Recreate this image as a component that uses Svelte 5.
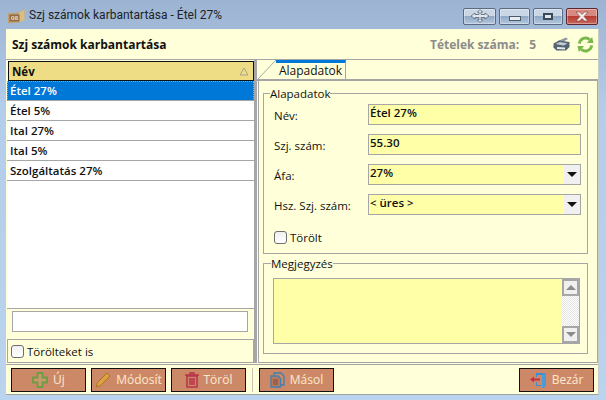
<script>
  const rows = ['Étel 27%', 'Étel 5%', 'Ital 27%', 'Ital 5%', 'Szolgáltatás 27%'];
  const fields = [
    { label: 'Név:', value: 'Étel 27%' },
    { label: 'Szj. szám:', value: '55.30' },
    { label: 'Áfa:', value: '27%', select: true },
    { label: 'Hsz. Szj. szám:', value: '< üres >', select: true }
  ];
</script>

<div class="window">
  <div class="titlebar">
    <svg class="app-icon" width="17" height="15" viewBox="0 0 17 15">
      <path d="M0 4.500 L10 3.500 L16.500 .5 L16.500 11 L11 13.500 L0 14 Z" fill="#c4a066" />
      <path d="M11 3.500 L16.500 .5 L16.500 11 L11 13.500 Z" fill="#d8bd88" />
      <rect x="1.500" y="5.500" width="10" height="7" fill="#8a6f48" />
      <text x="6.500" y="11" text-anchor="middle" font-size="5.500" font-family="'DejaVu Sans', sans-serif" font-weight="700" fill="#e6d6b4">08</text>
    </svg>
    <span class="title">Szj számok karbantartása - Étel 27%</span>
    <div class="caption">
      <div class="cap move">
        <svg width="20" height="14" viewBox="0 0 20 14">
          <path d="M10 .5 L12.500 3 H11 V5.500 H15 V4 L19 7 L15 10 V8.500 H11 V11 H12.500 L10 13.500 L7.500 11 H9 V8.500 H5 V10 L1 7 L5 4 V5.500 H9 V3 H7.500 Z" fill="#dfe6ee" stroke="#5c6470" stroke-width=".8" />
        </svg>
      </div>
      <div class="cap min"><span class="min-bar"></span></div>
      <div class="cap max"><span class="max-box"></span></div>
      <div class="cap close">
        <svg width="14" height="11" viewBox="0 0 14 11">
          <path d="M1 1 H4.500 L7 3.500 L9.500 1 H13 L9 5.500 L13 10 H9.500 L7 7.500 L4.500 10 H1 L5 5.500 Z" fill="#f3f0f0" stroke="#7c3a3a" stroke-width=".6" />
        </svg>
      </div>
    </div>
  </div>

  <div class="client">
    <header>
      <h1>Szj számok karbantartása</h1>
      <span class="count-label">Tételek száma:</span>
      <span class="count">5</span>
      <svg class="printer" width="17" height="14" viewBox="0 0 17 14">
        <path d="M5 4 L13 .5 L15 2 L8 6 Z" fill="#8f98a2" />
        <path d="M.5 6.500 L6 3.500 L16.500 5 L16.500 10 L13 13.500 L3.500 13.500 L.5 10.500 Z" fill="#566470" />
        <path d="M2.500 7 L7 5 L14.500 6.500 L10.500 8.500 Z" fill="#c4ced6" />
        <path d="M4 10 L12 10.500 L12 12.500 L4 12 Z" fill="#e4eaee" />
      </svg>
      <svg class="refresh" width="17" height="17" viewBox="0 0 18 18" fill="none">
        <path d="M2.500 8 A6.500 6.500 0 0 1 13.500 4" stroke="#7ab84e" stroke-width="3" />
        <path d="M10.500 7.500 L17.500 7.500 L16 1 Z" fill="#7ab84e" />
        <path d="M15.500 10 A6.500 6.500 0 0 1 4.500 14" stroke="#7ab84e" stroke-width="3" />
        <path d="M7.500 10.500 L.5 10.500 L2 17 Z" fill="#7ab84e" />
      </svg>
    </header>

    <div class="main">
      <div class="left">
        <div class="list">
          <div class="list-head">
            <span>Név</span>
            <svg width="10" height="9" viewBox="0 0 10 9"><path d="M5 1 L9 8 H1 Z" fill="none" stroke="#a8a48a" /></svg>
          </div>
          {#each rows as row, i}
            <div class="row" class:selected={i === 0}>{row}</div>
          {/each}
        </div>
        <div class="search"><div class="search-box"></div></div>
        <div class="deleted">
          <span class="check"></span>
          <span>Törölteket is</span>
        </div>
      </div>

      <div class="splitter"></div>

      <div class="right">
        <div class="tabs">
          <svg class="slant" width="18" height="19" viewBox="0 0 18 19"><path d="M0 19 L18 0" stroke="#a6a6a6" fill="none" /></svg>
          <div class="tab">Alapadatok</div>
        </div>
        <div class="panel">
          <fieldset class="basic">
            <legend>Alapadatok</legend>
            {#each fields as f}
              <div class="field">
                <span class="label">{f.label}</span>
                <div class="input">
                  <span>{f.value}</span>
                  {#if f.select}<span class="drop"><i></i></span>{/if}
                </div>
              </div>
            {/each}
            <div class="deleted-flag">
              <span class="check"></span>
              <span>Törölt</span>
            </div>
          </fieldset>
          <fieldset class="note">
            <legend>Megjegyzés</legend>
            <div class="memo">
              <div class="scroll">
                <div class="sbtn"><i class="up"></i></div>
                <div class="strack"></div>
                <div class="sbtn"><i class="down"></i></div>
              </div>
            </div>
          </fieldset>
        </div>
      </div>
    </div>

    <footer>
      <div class="btn">
        <svg width="16" height="16" viewBox="0 0 16 16"><path d="M5.500 1 H10.500 V5.500 H15 V10.500 H10.500 V15 H5.500 V10.500 H1 V5.500 H5.500 Z" fill="#c79a6c" stroke="#6f9a45" stroke-width="1.800" /></svg>
        <span>Új</span>
      </div>
      <div class="btn">
        <svg width="16" height="16" viewBox="0 0 16 16"><path d="M1 15 L2.500 10.500 L12 1 L15 4 L5.500 13.500 Z" fill="#e0a040" stroke="#a87420" /></svg>
        <span>Módosít</span>
      </div>
      <div class="btn">
        <svg width="14" height="16" viewBox="0 0 14 16" fill="none" stroke="#b8324a" stroke-width="1.500"><path d="M0 3 H14" /><path d="M5 2.500 V1 H9 V2.500" /><path d="M2 4 H12 V15 H2 Z" /><path d="M5 6 V13 M7 6 V13 M9 6 V13" /></svg>
        <span>Töröl</span>
      </div>
      <div class="sep"></div>
      <div class="btn">
        <svg width="15" height="16" viewBox="0 0 15 16" fill="none"><path d="M4 3 V1 H11 L14 4 V13 H11" stroke="#3f7fb0" stroke-width="1.300" /><path d="M1 4 H8 L10.500 6.500 V15 H1 Z" fill="#b97a5c" stroke="#3f7fb0" stroke-width="1.300" /><path d="M3 8 H8 M3 10 H8 M3 12 H8" stroke="#7a4a38" /></svg>
        <span>Másol</span>
      </div>
      <div class="spacer"></div>
      <div class="btn">
        <svg width="17" height="16" viewBox="0 0 17 16"><path d="M6 1 H16 V14 L12 16 V3 H7 V5 H6 Z M6 10 H7 V13 H11 V14 H6 Z" fill="#3e8ccc" /><path d="M12 3 L16 1 V14 L12 16 Z" fill="#4b9bd8" /><path d="M0 7.500 L4 4.500 V6.500 H10 V8.500 H4 V10.500 Z" fill="#c8304a" /></svg>
        <span>Bezár</span>
      </div>
    </footer>
  </div>
</div>

<style>
  :global(body) {
    margin: 0;
    background: #b9d1ec;
  }
  .window {
    width: 606px;
    height: 400px;
    box-sizing: border-box;
    padding: 0 7px 5px 6px;
    display: flex;
    flex-direction: column;
    background: linear-gradient(#9cb4d2, #b4cdea 110px, #bad3ee);
    font-family: "Open Sans", "Noto Sans", sans-serif;
    font-size: 11.500px;
    color: #111;
  }
  .titlebar {
    height: 29px;
    flex: none;
    display: flex;
    align-items: center;
    padding-top: 1px;
    box-sizing: border-box;
  }
  .app-icon {
    margin: 2px 4px 0 2px;
  }
  .title {
    font-family: Roboto, sans-serif;
    font-size: 12px;
    color: #1c2228;
  }
  .caption {
    margin-left: auto;
    display: flex;
    gap: 3px;
    margin-right: 1px;
    margin-top: 2px;
  }
  .cap {
    height: 17px;
    box-sizing: border-box;
    width: 32px;
    border: 1px solid #5a6a80;
    border-radius: 2px;
    display: flex;
    align-items: center;
    justify-content: center;
    background: linear-gradient(#c8d6e6 45%, #8fa9c7 50%, #b4c8de);
    box-shadow: inset 0 0 0 1px rgba(255, 255, 255, 0.35);
  }
  .move {
    width: 33px;
  }
  .min {
    width: 31px;
  }
  .max {
    width: 30px;
  }
  .min-bar {
    width: 10px;
    height: 3px;
    margin-top: 5px;
    background: #e8edf3;
    border: 1px solid #4c5a6c;
  }
  .max-box {
    width: 6px;
    height: 3px;
    border: 2px solid #3c4858;
    background: #dfe6ee;
  }
  .close {
    border-color: #5a2630;
    background: linear-gradient(#d98a80 45%, #b83c30 50%, #c8685c);
  }
  .client {
    flex: 1;
    min-height: 0;
    display: flex;
    flex-direction: column;
    background: #ffffd9;
    border-bottom: 1px solid #a0a0a0;
    border-right: 1px solid #c8ccc8;
  }
  header {
    height: 31px;
    flex: none;
    box-sizing: border-box;
    display: flex;
    align-items: center;
    border-bottom: 1px solid #a6a6a6;
    padding: 0 4px 0 6px;
  }
  h1 {
    margin: 0;
    font-size: 12px;
    font-weight: 700;
    color: #111;
  }
  .count-label {
    margin-left: auto;
    font-weight: 700;
    color: #8c8c8c;
    font-size: 12px;
  }
  .count {
    margin: 0 17px 0 10px;
    font-weight: 700;
    color: #8c8c8c;
    font-size: 12px;
  }
  .printer {
    margin-right: 7px;
  }
  .main {
    flex: none;
    height: 303px;
    display: flex;
  }
  .left {
    width: 248px;
    flex: none;
    display: flex;
    flex-direction: column;
  }
  .list {
    flex: 1;
    min-height: 0;
    background: #fff;
    border-bottom: 1px solid #a6a6a6;
    margin: 1px 0 0 1px;
  }
  .list-head {
    height: 20px;
    box-sizing: border-box;
    border: 1px solid #111;
    background: #eedd84;
    display: flex;
    align-items: center;
    justify-content: space-between;
    padding: 0 4px 0 3px;
    font-weight: 700;
    margin-left: 1px;
  }
  .row {
    height: 20px;
    box-sizing: border-box;
    border-bottom: 1px solid #a6a6a6;
    padding-left: 3px;
    line-height: 20px;
    font-weight: 600;
    color: #111;
  }
  .row.selected {
    background: #0078d7;
    color: #fff;
    outline: 1px dotted #f09040;
    outline-offset: -1px;
  }
  .search {
    flex: none;
    height: 30px;
    box-sizing: border-box;
    padding: 2px 6px 0 6px;
  }
  .search-box {
    height: 21px;
    box-sizing: border-box;
    background: #fff;
    border: 1px solid #a6a6a6;
  }
  .deleted {
    flex: none;
    height: 24px;
    box-sizing: border-box;
    margin-left: 1px;
    border: 1px solid #a6a6a6;
    display: flex;
    align-items: center;
    gap: 3px;
    padding-left: 3px;
  }
  .check {
    width: 13px;
    height: 13px;
    box-sizing: border-box;
    border: 1px solid #6e6e6e;
    border-radius: 3px;
    background: linear-gradient(#f0f0f0, #fff);
  }
  .splitter {
    width: 3px;
    flex: none;
    background: #a6a6a6;
  }
  .right {
    flex: 1;
    min-width: 0;
    display: flex;
    flex-direction: column;
  }
  .tabs {
    height: 21px;
    flex: none;
    box-sizing: border-box;
    border-bottom: 2px solid #a6a6a6;
    display: flex;
  }
  .slant {
    flex: none;
    margin-left: 1px;
  }
  .tab {
    width: 70px;
    height: 19px;
    box-sizing: border-box;
    border-top: 3px solid #0078d7;
    border-right: 1px solid #a6a6a6;
    line-height: 15px;
    text-align: center;
    font-size: 12px;
  }
  .panel {
    flex: 1;
    min-height: 0;
    box-sizing: border-box;
    margin-left: 1px;
    border-left: 1px solid #a6a6a6;
    border-right: 1px solid #a6a6a6;
    border-bottom: 1px solid #a6a6a6;
    padding: 5px 9px 8px 4px;
    display: flex;
    flex-direction: column;
    gap: 2px;
  }
  fieldset {
    margin: 0;
    border: 1px solid #a6a6a6;
    padding: 0;
    min-width: 0;
  }
  legend {
    padding: 0;
    line-height: 15px;
  }
  .basic {
    padding: 3px 6px 0 10px;
    height: 168px;
    flex: none;
    box-sizing: border-box;
  }
  .basic legend {
    margin-left: -4px;
  }
  .field {
    display: flex;
    height: 30px;
    align-items: flex-start;
  }
  .label {
    width: 94px;
    padding-top: 4px;
    line-height: 16px;
    flex: none;
  }
  .input {
    flex: 1;
    height: 21px;
    box-sizing: border-box;
    background: #ffffa8;
    border: 1px solid #a6a6a6;
    display: flex;
    justify-content: space-between;
    padding-left: 1px;
    line-height: 16px;
    font-weight: 600;
  }
  .drop {
    width: 16px;
    background: #f0f0f0;
    display: flex;
    align-items: center;
    justify-content: center;
  }
  .drop i {
    width: 0;
    height: 0;
    border-left: 5px solid transparent;
    border-right: 5px solid transparent;
    border-top: 5px solid #111;
  }
  .deleted-flag {
    display: flex;
    align-items: center;
    gap: 3px;
    margin-top: 6px;
  }
  .note {
    flex: 1;
    min-height: 0;
    padding: 7px 7px 9px 9px;
    box-sizing: border-box;
  }
  .note legend {
    margin-left: -2px;
  }
  .memo {
    height: 66px;
    box-sizing: border-box;
    background: #ffffa8;
    border: 1px solid #a6a6a6;
    display: flex;
    justify-content: flex-end;
  }
  .scroll {
    width: 17px;
    display: flex;
    flex-direction: column;
    background: repeating-conic-gradient(#e4e4e4 0 25%, #fff 0 50%) 0 0 / 2px 2px;
  }
  .strack {
    flex: 1;
  }
  .sbtn {
    height: 17px;
    box-sizing: border-box;
    border: 2px solid #a6a6a6;
    background: #f0f0f0;
    display: flex;
    align-items: center;
    justify-content: center;
  }
  .sbtn i {
    width: 0;
    height: 0;
    border-left: 5px solid transparent;
    border-right: 5px solid transparent;
  }
  .sbtn .up {
    border-bottom: 5px solid #8c8c8c;
  }
  .sbtn .down {
    border-top: 5px solid #8c8c8c;
  }
  footer {
    flex: 1;
    min-height: 0;
    display: flex;
    align-items: center;
    gap: 5px;
    padding: 0 4px 0 5px;
    border-top: 1px solid #a6a6a6;
    margin-top: 1px;
  }
  .btn {
    width: 75px;
    height: 24px;
    box-sizing: border-box;
    border: 1px solid #111;
    background: #cd8967;
    color: #fbe9cf;
    display: flex;
    align-items: center;
    justify-content: center;
    gap: 5px;
    font-size: 12px;
  }
  .sep {
    width: 1px;
    height: 24px;
    background: #c4c4b0;
    margin: 0 1px 0 1px;
  }
  .spacer {
    flex: 1;
  }
</style>
